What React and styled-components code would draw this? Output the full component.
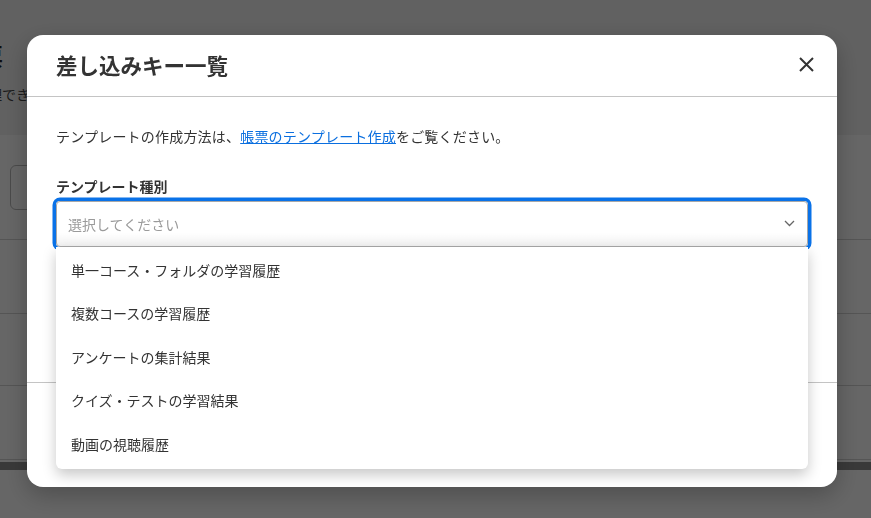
import React from 'react';
import styled, {createGlobalStyle} from 'styled-components'

const GlobalStyle = createGlobalStyle`
  html, body {
    margin: 0;
    padding: 0;
    background: #fff;
    font-family: "Noto Sans CJK JP", "Noto Sans", sans-serif;
    color: #333;
  }
`;

/* page behind the dialog */
const Page = styled.div`
  width: 871px;
  height: 518px;
  overflow: hidden;
`;

const PageHeader = styled.header`
  height: 135px;
  background: #f2f2f2;
  box-sizing: border-box;
  padding-top: 38px;
`;

const PageTitle = styled.h1`
  margin: 0 0 0 -45px;
  font-size: 24px;
  font-weight: 700;
  line-height: 36px;
  color: #222;
`;

const PageIntro = styled.p`
  margin: 10px 0 0 -12px;
  font-size: 14px;
  line-height: 20px;
  color: #444;
  white-space: nowrap;
`;

const Toolbar = styled.div`
  height: 104px;
  box-sizing: border-box;
  padding: 30px 0 0 10px;
`;

const SearchBox = styled.div`
  width: 200px;
  height: 45px;
  box-sizing: border-box;
  border: 1px solid #bbb;
  border-radius: 6px;
`;

const TableRow = styled.div`
  height: ${props => props.h}px;
  border-top: 1px solid #d4d4d4;
  box-sizing: border-box;
`;

const Band = styled.div`
  height: 8px;
  background: #909090;
`;

/* dialog */
const Backdrop = styled.div`
  position: fixed;
  inset: 0;
  background: rgba(0, 0, 0, 0.6);
  display: flex;
  align-items: flex-start;
  padding: 35px 0 0 27px;
`;

const Dialog = styled.div`
  width: 810px;
  height: 452px;
  background: #fff;
  border-radius: 16px;
  display: flex;
  flex-direction: column;
  box-shadow: 0 8px 24px rgba(0, 0, 0, 0.25);
`;

const DialogHeader = styled.div`
  height: 62px;
  box-sizing: border-box;
  flex: none;
  display: flex;
  align-items: center;
  justify-content: space-between;
  padding: 0 23px 2px 29px;
  border-bottom: 1px solid #c4c4c4;
`;

const DialogTitle = styled.h2`
  margin: 0;
  font-size: 21.5px;
  font-weight: 700;
  color: #333;
`;

const CloseButton = styled.button`
  border: none;
  background: none;
  padding: 0;
  width: 16px;
  height: 16px;
  display: flex;
  align-items: center;
  justify-content: center;
  cursor: pointer;
`;

const DialogBody = styled.div`
  flex: 1;
  padding: 29px 29px 0;
`;

const Lead = styled.p`
  margin: 0;
  font-size: 14px;
  line-height: 21px;
  letter-spacing: 0.2px;
  color: #333;
`;

const Link = styled.a`
  color: #0b6fdf;
  text-decoration: underline;
  cursor: pointer;
`;

const Label = styled.div`
  margin-top: 29px;
  font-size: 14px;
  font-weight: 700;
  line-height: 21px;
  color: #333;
`;

const SelectWrap = styled.div`
  position: relative;
  margin-top: 4px;
`;

const SelectBox = styled.div`
  height: 46px;
  box-sizing: border-box;
  border: 1px solid #a8a8a8;
  border-radius: 4px;
  background: linear-gradient(#fff 70%, #f1f1f1);
  box-shadow: 0 0 0 3.5px #0a72e8;
  display: flex;
  align-items: center;
  justify-content: space-between;
  padding: 0 12px 1px 11px;
  font-size: 14px;
  color: #9a9a9a;
`;

const Menu = styled.ul`
  position: absolute;
  top: 46px;
  left: 0;
  right: 0;
  margin: 0;
  padding: 1px 0 3px;
  list-style: none;
  background: #fff;
  border-radius: 0 0 6px 6px;
  box-shadow: 0 6px 14px rgba(0, 0, 0, 0.22);
  z-index: 2;
`;

const MenuItem = styled.li`
  height: 43.5px;
  display: flex;
  align-items: center;
  padding: 0 15px;
  font-size: 14px;
  color: #333;
`;

const DialogFooter = styled.div`
  height: 104px;
  flex: none;
  border-top: 1px solid #c4c4c4;
`;

const options = [
    '単一コース・フォルダの学習履歴',
    '複数コースの学習履歴',
    'アンケートの集計結果',
    'クイズ・テストの学習結果',
    '動画の視聴履歴',
];

export default function App() {
    return (
        <>
            <GlobalStyle/>
            <Page>
                <PageHeader>
                    <PageTitle>帳票</PageTitle>
                    <PageIntro>理できます。</PageIntro>
                </PageHeader>
                <Toolbar>
                    <SearchBox/>
                </Toolbar>
                <TableRow h={74}/>
                <TableRow h={72}/>
                <TableRow h={74}/>
                <TableRow h={3}/>
                <Band/>
            </Page>

            <Backdrop>
                <Dialog>
                    <DialogHeader>
                        <DialogTitle>差し込みキー一覧</DialogTitle>
                        <CloseButton aria-label="閉じる">
                            <svg width="15" height="15" viewBox="0 0 15 15">
                                <path d="M1 1L14 14M14 1L1 14" stroke="#333" strokeWidth="2" fill="none"/>
                            </svg>
                        </CloseButton>
                    </DialogHeader>
                    <DialogBody>
                        <Lead>
                            テンプレートの作成方法は、<Link>帳票のテンプレート作成</Link>をご覧ください。
                        </Lead>
                        <Label>テンプレート種別</Label>
                        <SelectWrap>
                            <SelectBox>
                                <span>選択してください</span>
                                <svg width="11" height="7" viewBox="0 0 11 7">
                                    <path d="M1 1L5.5 5.5L10 1" stroke="#666" strokeWidth="1.3" fill="none"/>
                                </svg>
                            </SelectBox>
                            <Menu>
                                {options.map((o, i) => (
                                    <MenuItem key={i}>{o}</MenuItem>
                                ))}
                            </Menu>
                        </SelectWrap>
                    </DialogBody>
                    <DialogFooter/>
                </Dialog>
            </Backdrop>
        </>
    )
}
